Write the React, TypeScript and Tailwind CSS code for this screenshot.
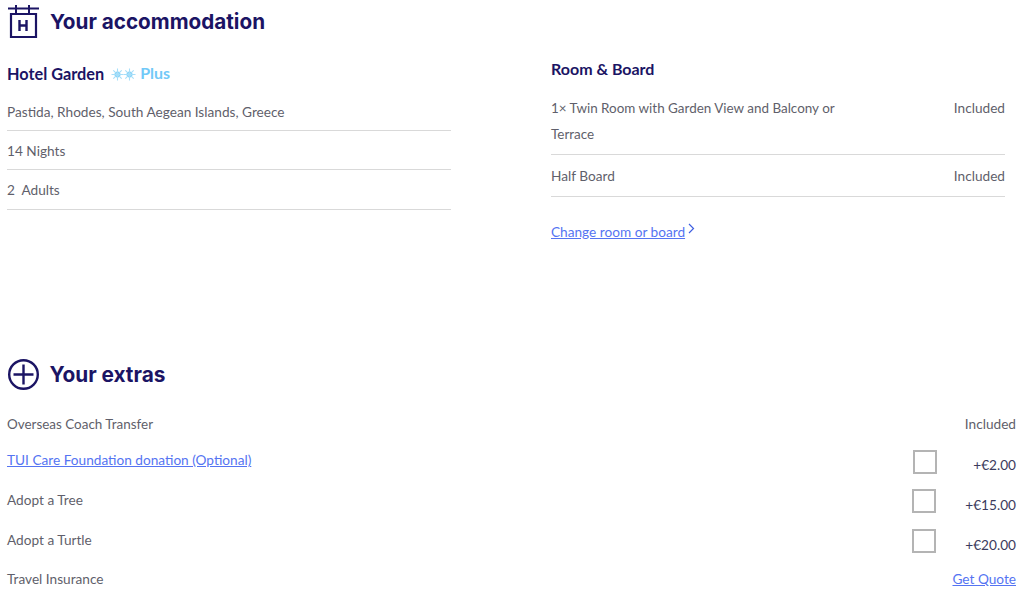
export default function App() {
  const body = "text-[13.65px] leading-[20px] text-[#5f5f6b]";
  const Check = ({ cls }: { cls: string }) => <div className={`w-[24px] h-[24px] border-2 border-[#b4b4b4] bg-white ${cls}`} />;
  return (
    <div className="w-[1024px] h-[594px] overflow-hidden bg-white font-['Lato',sans-serif] pl-[7px]">
      <div className="flex items-center h-[40px] pt-[4px]">
        <svg width="33" height="36" viewBox="0 0 33 36" fill="none" stroke="#1b1464" strokeWidth="2" className="shrink-0">
          <path d="M1 4.5H32M9 1V10M22 1V10" />
          <path d="M4 10H29V33H4Z" strokeWidth="2.2" />
          <path d="M12.5 16V27M19.5 16V27M12.5 21.5H19.5" strokeWidth="2.4" />
        </svg>
        <h1 className="ml-[10px] font-['Inter',sans-serif] font-bold text-[20.7px] leading-[28px] text-[#1b1464]">Your accommodation</h1>
      </div>
      <div className="flex mt-[18px]">
        <div className="w-[444px]">
          <div className="flex items-center h-[32px]">
            <span className="text-[16.3px] font-bold text-[#1b1464]">Hotel Garden</span>
            <svg width="25" height="13" viewBox="0 0 25 13" className="ml-[7px]" stroke="#a6def9" strokeWidth="1.1" fill="none">
              {[6.5, 18.5].map((c) => (
                <g key={c}>
                  <circle cx={c} cy="6.5" r="3" fill="#7fd0f7" stroke="none" />
                  <path d={`M${c - 6} 6.5H${c + 6}M${c} 0.5V12.5M${c - 4.2} 2.3L${c + 4.2} 10.7M${c + 4.2} 2.3L${c - 4.2} 10.7`} />
                </g>
              ))}
            </svg>
            <span className="ml-[4px] text-[16px] font-bold text-[#71c9f8] -mt-[2px]">Plus</span>
          </div>
          <div className={`${body} h-[41px] pt-[12px] border-b border-[#d9d9d9]`}>Pastida, Rhodes, South Aegean Islands, Greece</div>
          <div className={`${body} h-[39px] pt-[10px] border-b border-[#d9d9d9]`}>14 Nights</div>
          <div className={`${body} h-[40px] pt-[10px] border-b border-[#d9d9d9]`}>2&nbsp; Adults</div>
        </div>
        <div className="w-[454px] ml-[100px] -mt-[5px]">
          <div className="text-[16px] leading-[32px] font-bold text-[#1b1464]">Room &amp; Board</div>
          <div className="flex justify-between h-[70px] pt-[10px] border-b border-[#d9d9d9]">
            <div className="w-[290px] text-[13.45px] leading-[26px] text-[#5f5f6b]">1× Twin Room with Garden View and Balcony or Terrace</div>
            <div className="text-[13.65px] leading-[26px] text-[#5f5f6b]">Included</div>
          </div>
          <div className="flex justify-between h-[42px] pt-[8px] border-b border-[#d9d9d9] text-[13.65px] leading-[26px] text-[#5f5f6b]">
            <span>Half Board</span><span>Included</span>
          </div>
          <div className="flex mt-[25px] h-[20px]">
            <a className="text-[13.65px] leading-[20px] text-[#5574f2] underline">Change room or board</a>
            <svg width="7" height="11" viewBox="0 0 7 11" fill="none" stroke="#3f5fe0" strokeWidth="1.2" className="ml-[3px] mt-[1px]"><path d="M1 1L5.5 5.5L1 10" /></svg>
          </div>
        </div>
      </div>
      <div className="flex items-center mt-[117px] h-[32px]">
        <svg width="32" height="32" viewBox="0 0 32 32" fill="none" stroke="#1b1464" strokeWidth="2.4" className="shrink-0">
          <circle cx="16.5" cy="15.5" r="14.3" />
          <path d="M16.5 5.5V25.5M6.5 15.5H26.5" />
        </svg>
        <h2 className="ml-[10.5px] font-['Inter',sans-serif] font-bold text-[20.8px] leading-[28px] text-[#1b1464]">Your extras</h2>
      </div>
      <div className="w-[1009px] mt-[23px]">
        <div className={`flex justify-between h-[36px] ${body}`}><span className="text-[13.45px]">Overseas Coach Transfer</span><span>Included</span></div>
        <div className={`flex items-start h-[40px] ${body}`}>
          <a className="text-[#5574f2] underline">TUI Care Foundation donation (Optional)</a>
          <Check cls="ml-auto mt-[0px]" />
          <span className="w-[79px] text-right text-[#3b3b5c] mt-[5px]">+€2.00</span>
        </div>
        <div className={`flex items-start h-[40px] ${body}`}>
          <span>Adopt a Tree</span>
          <Check cls="ml-auto -mt-[1px] mr-[1px]" />
          <span className="w-[79px] text-right text-[#3b3b5c] mt-[5px]">+€15.00</span>
        </div>
        <div className={`flex items-start h-[39px] ${body}`}>
          <span>Adopt a Turtle</span>
          <Check cls="ml-auto -mt-[1px] mr-[1px]" />
          <span className="w-[79px] text-right text-[#3b3b5c] mt-[5px]">+€20.00</span>
        </div>
        <div className={`flex justify-between ${body}`}><span>Travel Insurance</span><a className="text-[#5574f2] underline">Get Quote</a></div>
      </div>
    </div>
  );
}
